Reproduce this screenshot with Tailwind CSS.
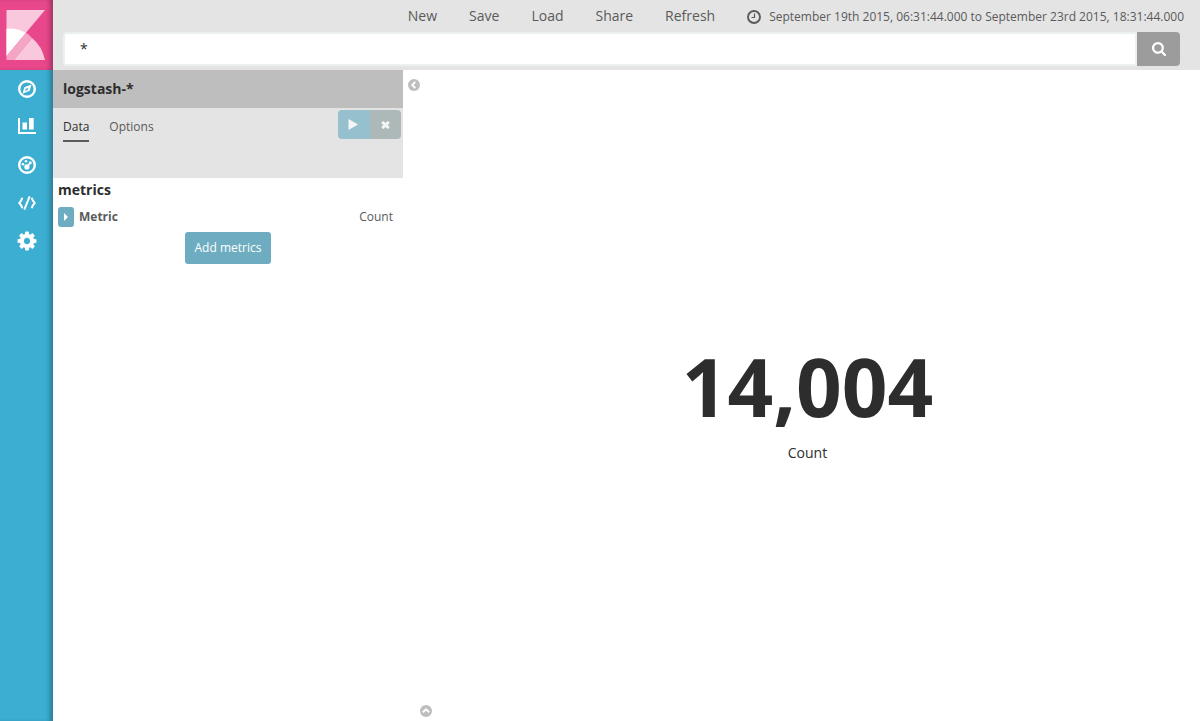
<!DOCTYPE html>
<html lang="en">
<head>
<meta charset="utf-8">
<title>Kibana - Visualize</title>
<script src="https://cdn.jsdelivr.net/npm/@tailwindcss/browser@4"></script>
</head>
<body class="flex min-h-screen bg-white font-['Open_Sans',sans-serif] text-[12px] leading-[18px] text-[#2d2d2d]">

<nav aria-label="Main" class="flex w-[53px] shrink-0 flex-col bg-[#3caed2] text-white shadow-[inset_-5px_0_5px_-2px_rgba(0,0,0,0.3)]">
  <a href="#" aria-label="Kibana" class="block h-[70px] bg-[#e8488b] shadow-[inset_-5px_0_5px_-2px_rgba(0,0,0,0.3)]">
    <svg class="block h-[70px] w-[53px]" viewBox="0 0 53 70">
      <path d="M6.500 10H45L6.500 56Z" fill="#f9c8dc"/>
      <path d="M6.500 28.700Q16 27.500 26 32.700L6.500 56Z" fill="#fff"/>
      <path d="M26 32.700Q29.500 34.800 32 38L14 60H6.500V56Z" fill="#f4a4c5"/>
      <path d="M32 38Q42 46 45 60H14Z" fill="#f9c8dc"/>
    </svg>
  </a>
  <a href="#" aria-label="Discover" class="flex h-[38px] items-center justify-center pl-px">
    <svg class="size-[18px]" viewBox="0 0 18 18" fill="none"><circle cx="9" cy="9" r="7.800" stroke="currentColor" stroke-width="2.400"/><path fill-rule="evenodd" fill="currentColor" d="M13.500 4.500L11.700 10.800L4.500 13.800L6.300 7.200ZM10.300 7.900L7.800 8.700L7.200 11L9.700 10Z"/></svg>
  </a>
  <a href="#" aria-label="Visualize" class="flex h-[36px] items-center justify-center pl-px">
    <svg class="h-4 w-[18px]" viewBox="0 0 18 16" fill="currentColor"><path d="M0 0H2V14H18V16H0ZM4.500 4.500H9V11.500H4.500ZM11 0H15.700V11.500H11Z"/></svg>
  </a>
  <a href="#" aria-label="Dashboard" class="flex h-[42px] items-center justify-center pl-px">
    <svg class="size-[18px]" viewBox="0 0 18 18" fill="none"><circle cx="9" cy="9" r="7.800" stroke="currentColor" stroke-width="2.400"/><path d="M9 10.500L12.300 7" stroke="currentColor" stroke-width="1.500"/><g fill="currentColor"><circle cx="8.900" cy="10.900" r="2.600"/><circle cx="5" cy="8.200" r="1.300"/><circle cx="8" cy="5.300" r="1.300"/><circle cx="12.300" cy="6.700" r="1.500"/></g></svg>
  </a>
  <a href="#" aria-label="Developer tools" class="flex h-[34px] items-center justify-center pl-px">
    <svg class="h-[14px] w-[18px]" viewBox="0 0 18 14" fill="none" stroke="currentColor" stroke-width="2"><path d="M4.300 1.800Q3.500 4.800 1.300 7Q3.500 9.200 4.300 12.200M13.700 1.800Q14.500 4.800 16.700 7Q14.500 9.200 13.700 12.200M11.700 .3L6.300 13.700"/></svg>
  </a>
  <a href="#" aria-label="Settings" class="flex h-[42px] items-center justify-center pl-px">
    <svg class="size-[22px]" viewBox="0 0 1792 1792" fill="currentColor"><path d="M1152 896q0-106-75-181t-181-75-181 75-75 181 75 181 181 75 181-75 75-181zm512-109v222q0 12-8 23t-20 13l-185 28q-19 54-39 91 35 50 107 138 10 12 10 25t-9 23q-27 37-99 108t-94 71q-12 0-26-9l-138-108q-44 23-91 38-16 136-29 186-7 28-36 28h-222q-14 0-24.500-8.500t-11.500-21.500l-28-184q-49-16-90-37l-141 107q-10 9-25 9-14 0-25-11-126-114-165-168-7-10-7-23 0-12 8-23 15-21 51-66.500t54-70.500q-27-50-41-99l-183-27q-13-2-21-12.500t-8-23.500v-222q0-12 8-23t19-13l186-28q14-46 39-92-40-57-107-138-10-12-10-24 0-10 9-23 26-36 98.500-107.500t94.500-71.500q13 0 26 10l138 107q44-23 91-38 16-136 29-186 7-28 36-28h222q14 0 24.500 8.500t11.500 21.500l28 184q49 16 90 37l142-107q9-9 24-9 13 0 25 10 129 119 165 170 7 8 7 22 0 12-8 23-15 21-51 66.500t-54 70.500q26 50 41 98l183 28q13 2 21 12.500t8 23.500z"/></svg>
  </a>
</nav>

<div class="flex min-w-0 flex-1 flex-col">
  <header class="bg-[#e4e4e4] pb-1 text-[#5a5a5a]">
    <div class="flex h-8 items-center justify-end pr-4">
      <div class="flex gap-8 text-[14px]">
        <button type="button">New</button>
        <button type="button">Save</button>
        <button type="button">Load</button>
        <button type="button">Share</button>
        <button type="button">Refresh</button>
      </div>
      <button type="button" class="ml-8 flex items-center gap-2 pt-[2px]">
        <svg class="size-[14px]" viewBox="0 0 14 14" fill="none" stroke="currentColor"><circle cx="7" cy="7" r="6" stroke-width="1.900"/><path d="M7.500 3.500V7.500H4.500" stroke-width="1.200"/></svg>
        <span>September 19th 2015, 06:31:44.000 to September 23rd 2015, 18:31:44.000</span>
      </button>
    </div>
    <form class="flex h-[34px] pr-5 pl-[10px]">
      <input type="text" aria-label="Search" value="*" class="min-w-0 flex-1 rounded-l border-2 border-[#ecf0f1] bg-white px-[15px] text-[14px] text-[#2d2d2d] outline-none">
      <button type="button" aria-label="Submit search" class="flex w-[43px] items-center justify-center rounded-r bg-[#9c9c9c] text-white">
        <svg class="size-[14px]" viewBox="0 0 1664 1664" fill="currentColor"><path d="M1152 704q0-185-131.500-316.500t-316.500-131.500-316.500 131.500-131.500 316.500 131.500 316.500 316.500 131.500 316.500-131.500 131.500-316.500zm512 832q0 53-37.500 90.500t-90.500 37.500q-54 0-90-38l-343-342q-179 124-399 124-143 0-273.500-55.500t-225-150-150-225-55.500-273.500 55.500-273.500 150-225 225-150 273.500-55.500 273.500 55.500 225 150 150 225 55.500 273.500q0 220-124 399l343 343q37 37 37 90z"/></svg>
      </button>
    </form>
  </header>

  <div class="flex flex-1">
    <aside class="w-[350px] shrink-0">
      <h1 class="flex h-[38px] items-center bg-[#bebebe] px-[10px] text-[14px] font-bold">logstash-*</h1>
      <div class="flex h-[70px] items-start justify-between bg-[#e4e4e4] pt-[2px] pr-[2px] pl-[10px]">
        <div class="flex gap-5 pt-2">
          <button type="button" class="border-b-2 border-[#5a5a5a] pb-1">Data</button>
          <button type="button" class="border-b-2 border-transparent pb-1 text-[#5a5a5a]">Options</button>
        </div>
        <div class="flex h-[29px] overflow-hidden rounded text-[#f4f6f6]">
          <button type="button" aria-label="Apply changes" class="flex w-8 items-center justify-center bg-[#96c0cd] pr-[2px]">
            <svg class="h-[11px] w-[10px]" viewBox="0 0 10 11" fill="currentColor"><path d="M.5 0L10 5.500L.5 11Z"/></svg>
          </button>
          <button type="button" aria-label="Discard changes" class="flex w-[31px] items-center justify-center bg-[#adb9b9] pt-px">
            <svg class="h-2 w-[9px]" viewBox="0 0 9 8" fill="none" stroke="currentColor" stroke-width="2.900"><path d="M1.200 .9L7.800 7.100M7.800 .9L1.200 7.100"/></svg>
          </button>
        </div>
      </div>
      <section>
        <h2 class="px-[5px] pt-[3px] text-[14px] font-bold">metrics</h2>
        <div class="flex items-center pt-2 pr-[10px] pl-[5px] text-[#5a5a5a]">
          <button type="button" aria-label="Expand metric" class="mr-[5px] flex h-5 w-4 items-center justify-center rounded-[3px] bg-[#6eadc1] text-white">
            <svg class="h-2 w-1" viewBox="0 0 4 8" fill="currentColor"><path d="M0 0L4 4L0 8Z"/></svg>
          </button>
          <span class="font-bold">Metric</span>
          <span class="ml-auto">Count</span>
        </div>
        <div class="flex justify-center pt-[5px]">
          <button type="button" class="h-8 rounded-[3px] bg-[#6eadc1] px-[10px] text-white">Add metrics</button>
        </div>
      </section>
    </aside>

    <main class="flex min-w-0 flex-1 flex-col">
      <button type="button" aria-label="Collapse editor" class="mt-[9px] ml-[5px] self-start text-[#bebebe]">
        <svg class="block size-3" viewBox="0 0 12 12"><circle cx="6" cy="6" r="6" fill="currentColor"/><path d="M7.300 2.800L4.200 6L7.300 9.200" fill="none" stroke="#fff" stroke-width="1.900"/></svg>
      </button>
      <div class="flex flex-1 flex-col items-center justify-center pb-[6px] pl-3">
        <div class="text-[80px] leading-[115px] font-bold">14,004</div>
        <div class="text-[14px] leading-5">Count</div>
      </div>
      <button type="button" aria-label="Show details" class="mb-1 ml-[17px] self-start text-[#bebebe]">
        <svg class="block size-3" viewBox="0 0 12 12"><circle cx="6" cy="6" r="6" fill="currentColor"/><path d="M2.800 7.300L6 4.200L9.200 7.300" fill="none" stroke="#fff" stroke-width="1.900"/></svg>
      </button>
    </main>
  </div>
</div>
</body>
</html>
